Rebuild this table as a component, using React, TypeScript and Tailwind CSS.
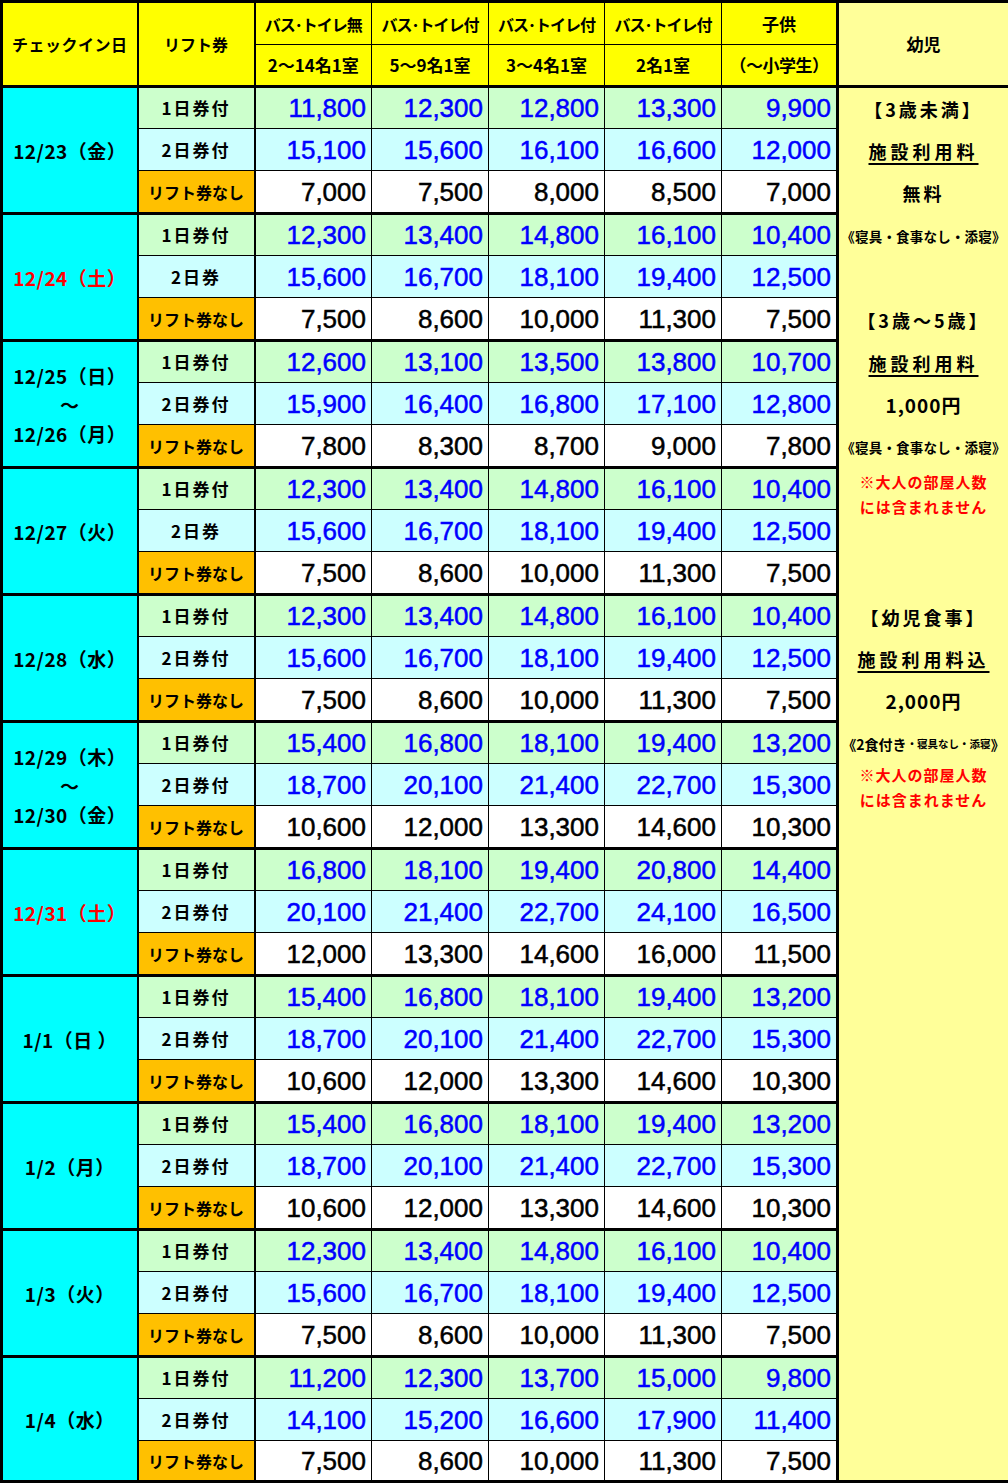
import type { ReactNode } from "react";

type Row = { label: string; prices: string[] };
type Group = { date: string[]; red?: boolean; rows: Row[] };

const L1 = "1日券付";
const L2 = "2日券付";
const L3 = "リフト券なし";

const mk = (a: string[], b: string[], c: string[], second = L2): Row[] => [
  { label: L1, prices: a },
  { label: second, prices: b },
  { label: L3, prices: c },
];

const groups: Group[] = [
  {
    date: ["12/23（金）"],
    rows: mk(
      ["11,800", "12,300", "12,800", "13,300", "9,900"],
      ["15,100", "15,600", "16,100", "16,600", "12,000"],
      ["7,000", "7,500", "8,000", "8,500", "7,000"],
    ),
  },
  {
    date: ["12/24（土）"],
    red: true,
    rows: mk(
      ["12,300", "13,400", "14,800", "16,100", "10,400"],
      ["15,600", "16,700", "18,100", "19,400", "12,500"],
      ["7,500", "8,600", "10,000", "11,300", "7,500"],
      "2日券",
    ),
  },
  {
    date: ["12/25（日）", "～", "12/26（月）"],
    rows: mk(
      ["12,600", "13,100", "13,500", "13,800", "10,700"],
      ["15,900", "16,400", "16,800", "17,100", "12,800"],
      ["7,800", "8,300", "8,700", "9,000", "7,800"],
    ),
  },
  {
    date: ["12/27（火）"],
    rows: mk(
      ["12,300", "13,400", "14,800", "16,100", "10,400"],
      ["15,600", "16,700", "18,100", "19,400", "12,500"],
      ["7,500", "8,600", "10,000", "11,300", "7,500"],
      "2日券",
    ),
  },
  {
    date: ["12/28（水）"],
    rows: mk(
      ["12,300", "13,400", "14,800", "16,100", "10,400"],
      ["15,600", "16,700", "18,100", "19,400", "12,500"],
      ["7,500", "8,600", "10,000", "11,300", "7,500"],
    ),
  },
  {
    date: ["12/29（木）", "～", "12/30（金）"],
    rows: mk(
      ["15,400", "16,800", "18,100", "19,400", "13,200"],
      ["18,700", "20,100", "21,400", "22,700", "15,300"],
      ["10,600", "12,000", "13,300", "14,600", "10,300"],
    ),
  },
  {
    date: ["12/31（土）"],
    red: true,
    rows: mk(
      ["16,800", "18,100", "19,400", "20,800", "14,400"],
      ["20,100", "21,400", "22,700", "24,100", "16,500"],
      ["12,000", "13,300", "14,600", "16,000", "11,500"],
    ),
  },
  {
    date: ["1/1（日 ）"],
    rows: mk(
      ["15,400", "16,800", "18,100", "19,400", "13,200"],
      ["18,700", "20,100", "21,400", "22,700", "15,300"],
      ["10,600", "12,000", "13,300", "14,600", "10,300"],
    ),
  },
  {
    date: ["1/2（月）"],
    rows: mk(
      ["15,400", "16,800", "18,100", "19,400", "13,200"],
      ["18,700", "20,100", "21,400", "22,700", "15,300"],
      ["10,600", "12,000", "13,300", "14,600", "10,300"],
    ),
  },
  {
    date: ["1/3（火）"],
    rows: mk(
      ["12,300", "13,400", "14,800", "16,100", "10,400"],
      ["15,600", "16,700", "18,100", "19,400", "12,500"],
      ["7,500", "8,600", "10,000", "11,300", "7,500"],
    ),
  },
  {
    date: ["1/4（水）"],
    rows: mk(
      ["11,200", "12,300", "13,700", "15,000", "9,800"],
      ["14,100", "15,200", "16,600", "17,900", "11,400"],
      ["7,500", "8,600", "10,000", "11,300", "7,500"],
    ),
  },
];

const rowStyle = [
  { h: "h-[42px]", label: "bg-[#ccffcc]", cell: "bg-[#ccffcc] text-[#0000ff]" },
  { h: "h-[42px]", label: "bg-[#ccffff]", cell: "bg-[#ccffff] text-[#0000ff]" },
  { h: "h-[43px]", label: "bg-[#ffc000]", cell: "bg-white text-black" },
];

function Slot({ h, children, className = "" }: { h: string; children?: ReactNode; className?: string }) {
  return <div className={`flex w-full items-center justify-center ${h} ${className}`}>{children}</div>;
}

function RedNote() {
  return (
    <div className="text-center text-[15px] font-bold leading-[25px] tracking-[1px] text-[#ff0000]">
      <div>※大人の部屋人数</div>
      <div>には含まれません</div>
    </div>
  );
}

function Under({ children }: { children: ReactNode }) {
  return (
    <span className="text-[18px] font-bold tracking-[4px] underline decoration-2 underline-offset-4">
      {children}
    </span>
  );
}

function InfantColumn() {
  const big = "text-[18px] font-bold tracking-[3px]";
  const small = "text-[13.5px] font-bold tracking-[0.2px] whitespace-nowrap";
  return (
    <div className="flex flex-col items-center text-black">
      <Slot h="h-[42px]" className={big}>【3歳未満】</Slot>
      <Slot h="h-[42px]">
        <Under>施設利用料</Under>
      </Slot>
      <Slot h="h-[43px]" className={big}>無料</Slot>
      <Slot h="h-[42px]" className={small}>《寝具・食事なし・添寝》</Slot>
      <Slot h="h-[42px]" />
      <Slot h="h-[43px]" className={big}>【3歳～5歳】</Slot>
      <Slot h="h-[42px]">
        <Under>施設利用料</Under>
      </Slot>
      <Slot h="h-[42px]" className="text-[19px] font-bold tracking-[1px]">1,000円</Slot>
      <Slot h="h-[43px]" className={small}>《寝具・食事なし・添寝》</Slot>
      <div className="flex h-[127px] w-full justify-center">
        <RedNote />
      </div>
      <Slot h="h-[42px]" className={big}>【幼児食事】</Slot>
      <Slot h="h-[42px]">
        <Under>施設利用料込</Under>
      </Slot>
      <Slot h="h-[43px]" className="text-[19px] font-bold tracking-[1px]">2,000円</Slot>
      <Slot h="h-[42px]" className="whitespace-nowrap font-bold">
        <span className="text-[14px]">《2食付き</span>
        <span className="text-[10.5px]">・寝具なし・添寝</span>
        <span className="text-[14px]">》</span>
      </Slot>
      <div className="-mt-[3px] flex w-full justify-center">
        <RedNote />
      </div>
    </div>
  );
}

const head = "border border-black bg-[#ffff00] text-center align-middle font-bold text-black";

export default function App() {
  return (
    <div className="w-[1008px] bg-white font-['Noto_Sans_CJK_JP',sans-serif]">
      <table className="w-[1008px] table-fixed border-collapse border-[3px] border-black">
        <colgroup>
          <col className="w-[136px]" />
          <col className="w-[117px]" />
          <col className="w-[117px]" />
          <col className="w-[117px]" />
          <col className="w-[116px]" />
          <col className="w-[117px]" />
          <col className="w-[116px]" />
          <col className="w-[172px]" />
        </colgroup>
        <thead>
          <tr className="h-[43px]">
            <th rowSpan={2} className={`${head} border-r-2 border-b-[3px] text-[16px] tracking-[0.5px]`}>
              チェックイン日
            </th>
            <th rowSpan={2} className={`${head} border-r-2 border-b-[3px] text-[16px]`}>
              リフト券
            </th>
            <th className={`${head} text-[16px] tracking-[-1px]`}>バス･トイレ無</th>
            <th className={`${head} text-[16px] tracking-[-1px]`}>バス･トイレ付</th>
            <th className={`${head} text-[16px] tracking-[-1px]`}>バス･トイレ付</th>
            <th className={`${head} text-[16px] tracking-[-1px]`}>バス･トイレ付</th>
            <th className={`${head} border-r-[3px] text-[17px]`}>子供</th>
            <th rowSpan={2} className={`${head} border-l-[3px] border-b-[3px] bg-[#ffff99] text-[17px]`}>
              幼児
            </th>
          </tr>
          <tr className="h-[42px]">
            <th className={`${head} border-b-[3px] text-[17px]`}>2～14名1室</th>
            <th className={`${head} border-b-[3px] text-[17px]`}>5～9名1室</th>
            <th className={`${head} border-b-[3px] text-[17px]`}>3～4名1室</th>
            <th className={`${head} border-b-[3px] text-[17px]`}>2名1室</th>
            <th className={`${head} border-b-[3px] border-r-[3px] text-[17px] tracking-[-0.5px]`}>（～小学生）</th>
          </tr>
        </thead>
        <tbody>
          {groups.map((g, gi) =>
            g.rows.map((row, ri) => {
              const s = rowStyle[ri];
              const last = ri === 2 ? "border-b-[3px]" : "";
              const h = gi === groups.length - 1 && ri === 2 ? "h-[41px]" : s.h;
              return (
                <tr key={`${gi}-${ri}`} className={h}>
                  {ri === 0 && (
                    <td
                      rowSpan={3}
                      className={`border border-r-2 border-b-[3px] border-black bg-[#00ffff] text-center align-middle text-[19px] font-bold leading-[29px] tracking-[0.5px] ${
                        g.red ? "text-[#ff0000]" : "text-black"
                      }`}
                    >
                      {g.date.map((d, i) => (
                        <div key={i}>{d}</div>
                      ))}
                    </td>
                  )}
                  <td
                    className={`border border-r-2 border-black ${last} ${s.label} text-center align-middle font-bold text-black ${
                      row.label === L3 ? "text-[16px]" : "text-[17px] tracking-[2px]"
                    }`}
                  >
                    {row.label}
                  </td>
                  {row.prices.map((p, pi) => (
                    <td
                      key={pi}
                      className={`border border-black ${last} ${pi === 4 ? "border-r-[3px]" : ""} ${s.cell} pr-[5px] text-right align-middle font-['Liberation_Sans',Arial,sans-serif] text-[26px] leading-none [-webkit-text-stroke:0.5px_currentColor]`}
                    >
                      {p}
                    </td>
                  ))}
                  {gi === 0 && ri === 0 && (
                    <td rowSpan={33} className="border border-l-[3px] border-black bg-[#ffff99] p-0 align-top">
                      <InfantColumn />
                    </td>
                  )}
                </tr>
              );
            }),
          )}
        </tbody>
      </table>
    </div>
  );
}
